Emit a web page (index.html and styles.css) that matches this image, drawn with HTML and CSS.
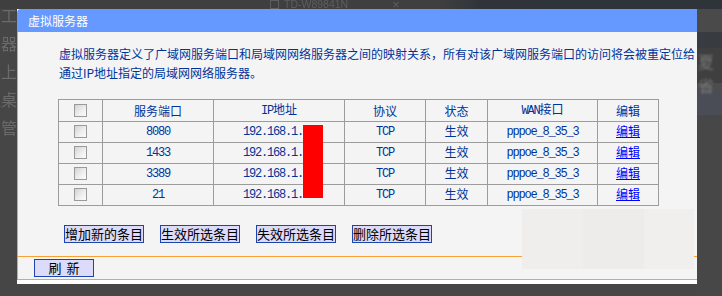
FILE: index.html
```html
<!DOCTYPE html>
<html lang="zh-CN">

<head>
    <meta charset="UTF-8">
    <meta name="viewport" content="width=device-width, initial-scale=1.0">
    <title>虚拟服务器</title>

    <link rel="stylesheet" href="styles.css">
</head>

<body>
    <div class="topbar">
        <div class="tab">
            <span class="tabicon"></span>
            <span class="tabname">TD-W89841N</span>
            <span class="tabclose">×</span>
        </div>
    </div>

    <div class="main">
        <div class="side left">
            <span>用工</span>
            <span>由器</span>
            <span>器上</span>
            <span>程桌</span>
            <span>台管</span>
        </div>

        <div class="panel">
            <div class="title">虚拟服务器</div>

            <div class="content">
                <p class="desc">虚拟服务器定义了广域网服务端口和局域网网络服务器之间的映射关系，所有对该广域网服务端口的访问将会被重定位给<br>通过IP地址指定的局域网网络服务器。</p>

                <div class="tablewrap">
                    <table class="vs">
                        <colgroup>
                            <col style="width: 44px">
                            <col style="width: 111px">
                            <col style="width: 131px">
                            <col style="width: 81px">
                            <col style="width: 62px">
                            <col style="width: 110px">
                            <col style="width: 61px">
                        </colgroup>
                        <tr class="head">
                            <td><input type="checkbox" class="chk"></td>
                            <td>服务端口</td>
                            <td><span class="en">IP</span>地址</td>
                            <td>协议</td>
                            <td>状态</td>
                            <td><span class="en">WAN</span>接口</td>
                            <td>编辑</td>
                        </tr>
                        <tr>
                            <td><input type="checkbox" class="chk"></td>
                            <td class="en">8080</td>
                            <td class="en ip">192.168.1.</td>
                            <td class="en">TCP</td>
                            <td>生效</td>
                            <td class="en">pppoe_8_35_3</td>
                            <td><a href="#">编辑</a></td>
                        </tr>
                        <tr>
                            <td><input type="checkbox" class="chk"></td>
                            <td class="en">1433</td>
                            <td class="en ip">192.168.1.</td>
                            <td class="en">TCP</td>
                            <td>生效</td>
                            <td class="en">pppoe_8_35_3</td>
                            <td><a href="#">编辑</a></td>
                        </tr>
                        <tr>
                            <td><input type="checkbox" class="chk"></td>
                            <td class="en">3389</td>
                            <td class="en ip">192.168.1.</td>
                            <td class="en">TCP</td>
                            <td>生效</td>
                            <td class="en">pppoe_8_35_3</td>
                            <td><a href="#">编辑</a></td>
                        </tr>
                        <tr>
                            <td><input type="checkbox" class="chk"></td>
                            <td class="en">21</td>
                            <td class="en ip">192.168.1.</td>
                            <td class="en">TCP</td>
                            <td>生效</td>
                            <td class="en">pppoe_8_35_3</td>
                            <td><a href="#">编辑</a></td>
                        </tr>
                    </table>
                    <!-- hidden part of the addresses -->
                    <div class="mask"></div>
                </div>

                <div class="actions">
                    <button class="btn">增加新的条目</button>
                    <button class="btn">生效所选条目</button>
                    <button class="btn">失效所选条目</button>
                    <button class="btn">删除所选条目</button>
                </div>
            </div>

            <div class="footer">
                <button class="btn refresh">刷 新</button>
            </div>

            <div class="ghost">
                <div></div>
                <div></div>
                <div></div>
            </div>
        </div>

        <div class="side right">
            <span class="blur">夏省</span>
        </div>
    </div>
</body>

</html>
```

FILE: styles.css
```css
* {
    margin: 0;
    padding: 0;
    box-sizing: border-box;
}

body {
    width: 722px;
    height: 296px;
    overflow: hidden;
    background-color: #464646;
    font-family: "Noto Sans CJK SC", "Noto Sans", sans-serif;
    font-size: 12px;
}

/* browser strip behind the dialog */
.topbar {
    height: 9px;
    overflow: hidden;
    display: flex;
    align-items: flex-end;
    background: linear-gradient(to right, #3f3f40 0, #3f3f40 440px, #30343a 480px, #2f333a 100%);
}

.tab {
    display: flex;
    align-items: center;
    margin-left: 270px;
    height: 14px;
    color: #5e5e5e;
    font-family: "Liberation Sans", sans-serif;
    font-size: 10.5px;
    margin-bottom: -2px;
    filter: blur(0.4px);
}

.tabicon {
    width: 9px;
    height: 9px;
    border: 1px solid #5e5e5e;
    margin-right: 5px;
}

.tabclose {
    margin-left: 44px;
    font-size: 13px;
}

.main {
    display: flex;
    height: 287px;
}

.side {
    overflow: hidden;
    color: #6a6a6a;
    font-size: 16px;
}

.side.left {
    width: 17px;
    display: flex;
    flex-direction: column;
    align-items: flex-end;
    margin-top: -8px;
    line-height: 28px;
    white-space: nowrap;
}

.side.left span {
    filter: blur(0.6px);
}

.side.right {
    width: 25px;
    padding-top: 40px;
    background: linear-gradient(to bottom,
        #4a4a4a 0, #4a4a4a 23px,
        #383b40 23px, #383b40 39px,
        #3f3f3f 39px, #3f3f3f 74px,
        #4d4d4d 74px, #4d4d4d 81px,
        #4a4d55 81px, #4a4d55 106px,
        #474747 106px);
    background-repeat: no-repeat;
}

.side.right .blur {
    display: block;
    margin-left: 1px;
    filter: blur(0.8px);
    color: #777;
}

/* dialog */
.panel {
    position: relative;
    width: 680px;
    height: 275px;
    background-color: #fff;
}

.title {
    height: 23px;
    line-height: 23px;
    padding-left: 11px;
    background-color: #6699ff;
    border-top-left-radius: 4px;
    color: #fff;
    font-size: 12px;
}

.content {
    height: 225px;
    background-color: #f4f4f4;
    border-left: 1px solid #f7a033;
    border-bottom: 1px solid #f7a033;
    padding-top: 12px;
}

.desc {
    margin-left: 41px;
    line-height: 19px;
    color: #003399;
    white-space: nowrap;
}

.tablewrap {
    position: relative;
    width: 601px;
    margin-left: 40px;
    margin-top: 17px;
}

.vs {
    border-collapse: collapse;
    table-layout: fixed;
    width: 601px;
}

.vs td {
    height: 21px;
    border: 1px solid #9c9c9c;
    text-align: center;
    color: #003399;
    font-size: 12px;
    line-height: 17px;
    padding: 0 0 3px;
}

.vs .head td {
    padding-bottom: 1px;
}

.vs .en {
    font-family: "Liberation Mono", monospace;
    font-size: 12px;
    letter-spacing: -1.2px;
}

.vs td.en {
    padding-bottom: 0;
}

.vs td.ip {
    text-align: left;
    padding-left: 29px;
}

.vs a {
    color: #0000ff;
    text-decoration: underline;
}

.chk {
    appearance: none;
    display: block;
    margin: 1px auto 0;
    width: 13px;
    height: 13px;
    border: 1px solid #9a9a9a;
    background: linear-gradient(135deg, #d2d2d2 0, #eeeeee 55%, #fbfbfb 100%);
}

.mask {
    position: absolute;
    left: 245px;
    top: 26px;
    width: 20px;
    height: 73px;
    background-color: #ff0000;
}

.actions {
    display: flex;
    gap: 16px;
    margin-left: 46px;
    margin-top: 19px;
}

.btn {
    width: 80px;
    height: 18px;
    background-color: #dcdcfa;
    border: 1px solid #1d44b0;
    color: #000;
    font-family: "Noto Sans CJK SC", sans-serif;
    font-size: 13px;
    line-height: 16px;
    white-space: nowrap;
    overflow: hidden;
}

.footer {
    height: 23px;
    background-color: #f4f4f4;
    border-left: 1px solid #f7a033;
    border-bottom: 1px solid #f7a033;
    padding-top: 2px;
    padding-left: 16px;
}

.refresh {
    width: 60px;
    word-spacing: 2px;
}

/* faint leftover of a popup over the dialog */
.ghost {
    position: absolute;
    left: 505px;
    top: 200px;
    width: 172px;
    height: 60px;
    display: flex;
}

.ghost div {
    flex: 61px 0 0;
    background-color: #efeeec;
}

.ghost div:nth-child(2) {
    background-color: #edecea;
}

.ghost div:nth-child(3) {
    flex: 50px 0 0;
    background-color: #f0efee;
}
```
